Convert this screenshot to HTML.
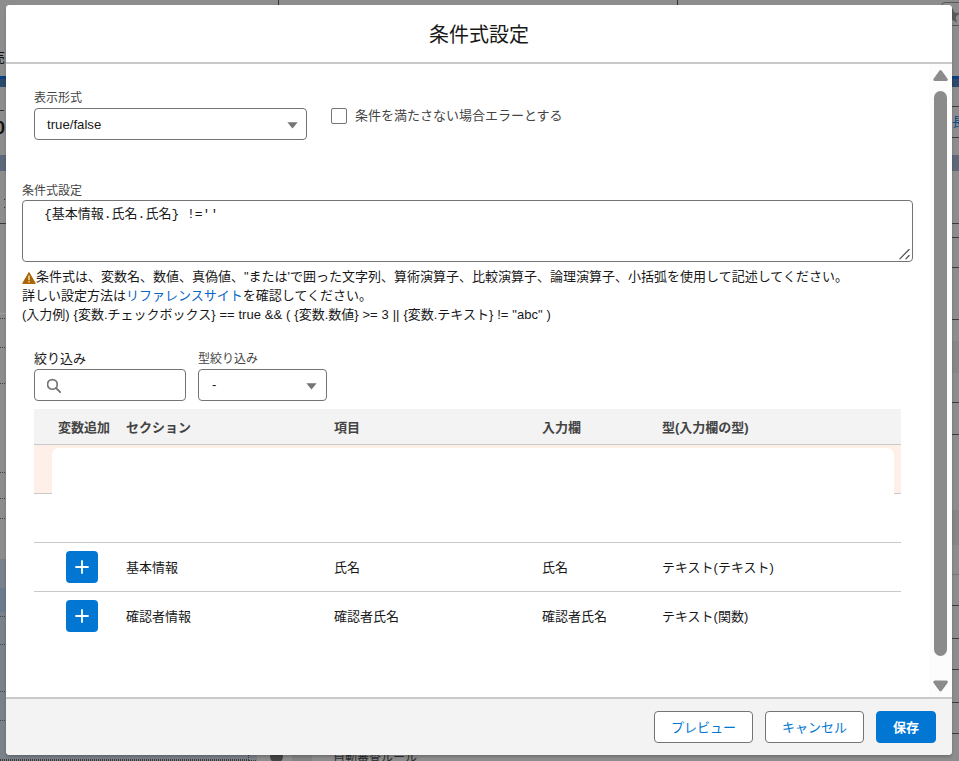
<!DOCTYPE html>
<html lang="ja">
<head>
<meta charset="utf-8">
<title>条件式設定</title>
<style>
*{box-sizing:border-box;margin:0;padding:0}
html,body{width:959px;height:761px;overflow:hidden}
body{position:relative;background:#8d8d8d;font-family:"Liberation Sans","Noto Sans CJK JP",sans-serif;font-size:13px;color:#181818}
.abs{position:absolute}
.t{position:absolute;white-space:nowrap;line-height:1}
/* backdrop fragments */
.bg{position:absolute}
.dot{left:0;width:6px;height:1px;background:repeating-linear-gradient(90deg,#444 0 1px,transparent 1px 2px)}
.hl{left:950px;width:9px;height:1px;background:#3d3d3d}
/* modal */
#modal{position:absolute;left:6px;top:5px;width:946px;height:750px;background:#fff;border-radius:4px;overflow:hidden;box-shadow:0 2px 3px rgba(0,0,0,.2)}
#in{position:absolute;left:0;top:-1px;width:946px;height:751px}
#hdr{position:absolute;left:0;top:0;width:946px;height:60px;border-bottom:2px solid #c9c9c9;background:#fff}
#title{position:absolute;left:0;width:946px;top:19px;text-align:center;font-size:20px;line-height:24px;color:#181818}
#ftr{position:absolute;left:0;top:693px;width:946px;height:58px;background:#f3f3f3;border-top:2px solid #c9c9c9}
.btn{position:absolute;top:12px;height:32px;border:1px solid #747474;border-radius:4px;background:#fff;color:#0176d3;font-size:13px;line-height:31px;text-align:center}
.btn.brand{background:#0176d3;border-color:#0176d3;color:#fff;font-weight:bold}
/* scrollbar */
#sb{position:absolute;left:923px;top:60px;width:23px;height:633px;background:#fcfcfc}
#thumb{position:absolute;left:5px;top:27px;width:13px;height:565px;border-radius:6.5px;background:#8b8b8b}
.lbl{font-size:12px;color:#444}
.box{position:absolute;border:1px solid #747474;border-radius:4px;background:#fff}
.help{font-size:13px;color:#181818}
a{color:#0a66c4;text-decoration:none}
#th{position:absolute;left:28px;top:405px;width:867px;height:36px;background:#f3f3f3;border-bottom:1px solid #c9c9c9}
.th{position:absolute;top:12px;font-weight:bold;font-size:13px;color:#444;line-height:1;white-space:nowrap}
.row{position:absolute;left:28px;width:867px;height:49px;border-top:1px solid #c9c9c9}
.row .c{position:absolute;top:18px;font-size:13px;line-height:1;white-space:nowrap;color:#181818}
.plus{position:absolute;left:32px;top:8px;width:32px;height:32px;border-radius:4px;background:#0176d3}
</style>
</head>
<body>
<!-- backdrop fragments peeking around the modal -->
<div class="bg" style="left:278px;top:0;width:1px;height:6px;background:#333"></div>
<div class="bg" style="left:677px;top:0;width:1px;height:6px;background:#333"></div>
<div class="bg" style="left:941px;top:2px;width:30px;height:24px;border:1px solid #575757;border-radius:4px"></div>
<svg class="bg" style="left:944px;top:7px" width="16" height="16" viewBox="0 0 16 16"><path d="M8 0.5 L10.3 5.6 L15.8 6.2 L11.7 10 L12.9 15.5 L8 12.7 L3.1 15.5 L4.3 10 L0.2 6.2 L5.7 5.6 Z" fill="#5a5a5a"/></svg>
<!-- left strip -->
<div class="t" style="left:-8px;top:51px;font-size:13px;color:#111">売</div>
<div class="bg" style="left:0;top:76px;width:8px;height:3px;background:#0b3f80"></div>
<div class="bg" style="left:0;top:79px;width:8px;height:8px;background:#2c4a6c"></div>
<div class="bg" style="left:0;top:110px;width:4px;height:1px;background:#333"></div>
<div class="t" style="left:-5px;top:119px;font-size:18px;font-weight:bold;color:#111">0</div>
<div class="bg" style="left:0;top:155px;width:8px;height:16px;background:#5b6979"></div>
<div class="bg" style="left:4px;top:199px;width:1px;height:1px;background:#333"></div>
<div class="bg" style="left:4px;top:207px;width:1px;height:1px;background:#333"></div>
<div class="bg" style="left:0;top:223px;width:8px;height:1px;background:#3a3a3a"></div>
<div class="bg" style="left:0;top:313px;width:8px;height:1px;background:#a0a0a0"></div>
<div class="bg dot" style="top:318px"></div>
<div class="bg dot" style="top:347px"></div>
<div class="bg dot" style="top:383px"></div>
<div class="bg dot" style="top:472px"></div>
<div class="bg dot" style="top:498px"></div>
<div class="bg dot" style="top:518px"></div>
<div class="bg" style="left:0;top:559px;width:8px;height:29px;background:#78818c"></div>
<div class="bg" style="left:0;top:588px;width:8px;height:24px;background:#6b7b8d"></div>
<div class="bg" style="left:0;top:612px;width:8px;height:149px;background:#7a8189"></div>
<div class="bg dot" style="top:616px"></div>
<div class="bg dot" style="top:644px"></div>
<div class="bg dot" style="top:691px"></div>
<div class="bg dot" style="top:720px"></div>
<!-- bottom strip -->
<div class="bg" style="left:0;top:753px;width:257px;height:8px;background:#7a8189"></div>
<div class="bg" style="left:0;top:759px;width:249px;height:2px;background:repeating-linear-gradient(90deg,#3c3c3c 0 1px,transparent 1px 2px)"></div>
<div class="bg" style="left:249px;top:760px;width:8px;height:1px;background:repeating-linear-gradient(90deg,#3c3c3c 0 1px,transparent 1px 2px)"></div>
<div class="bg" style="left:248px;top:755px;width:1px;height:4px;background:repeating-linear-gradient(180deg,#333 0 1px,transparent 1px 2px)"></div>
<div class="bg" style="left:270px;top:750px;width:13px;height:13px;border-radius:50%;background:#444"></div>
<div class="bg" style="left:292px;top:750px;width:20px;height:11px;background:#838383"></div>
<div class="t" style="left:333px;top:752px;font-size:12px;color:#2b2b2b">自動審査ルール</div>
<!-- right strip -->
<div class="bg" style="left:950px;top:76px;width:9px;height:3px;background:#0b3f80"></div>
<div class="bg" style="left:950px;top:79px;width:9px;height:8px;background:#2c4a6c"></div>
<div class="bg hl" style="top:106px"></div>
<div class="t" style="left:952px;top:115px;font-size:13px;color:#0b4a8a">長</div>
<div class="bg hl" style="top:137px"></div>
<div class="bg" style="left:950px;top:155px;width:9px;height:16px;background:#5b6979"></div>
<div class="bg hl" style="top:223px"></div>
<div class="bg hl" style="top:237px"></div>
<div class="bg hl" style="top:267px"></div>
<div class="bg hl" style="top:319px"></div>
<div class="bg" style="left:950px;top:341px;width:9px;height:32px;background:#878787"></div>
<div class="bg hl" style="top:402px"></div>
<div class="bg hl" style="top:434px"></div>
<div class="bg" style="left:950px;top:510px;width:9px;height:35px;background:#868686"></div>
<div class="bg hl" style="top:574px;background:#777"></div>
<div class="bg hl" style="top:605px"></div>
<div class="bg hl" style="top:638px"></div>
<div class="bg hl" style="top:669px"></div>
<div class="bg hl" style="top:702px"></div>
<div class="bg hl" style="top:733px"></div>
<div id="modal"><div id="in">
  <div id="hdr"><div id="title">条件式設定</div></div>

  <div id="sb">
    <svg class="abs" style="left:4px;top:6px" width="16" height="13" viewBox="0 0 16 13"><path d="M7.55 1.7 L13.3 9.6 H1.8 Z" fill="#8b8b8b" stroke="#8b8b8b" stroke-width="3" stroke-linejoin="round"/></svg>
    <div id="thumb"></div>
    <svg class="abs" style="left:4px;top:616px" width="16" height="13" viewBox="0 0 16 13"><path d="M7.55 9.8 L13.3 2 H1.8 Z" fill="#8b8b8b" stroke="#8b8b8b" stroke-width="3" stroke-linejoin="round"/></svg>
  </div>

  <!-- 表示形式 -->
  <div class="t lbl" style="left:28px;top:88px">表示形式</div>
  <div class="box" style="left:28px;top:104px;width:273px;height:32px">
    <div class="t" style="left:12px;top:9px;font-size:13.2px">true/false</div>
    <svg class="abs" style="left:251.5px;top:13px" width="11" height="7" viewBox="0 0 11 7"><path d="M0.4 0.3 H10.6 L5.5 6.5 Z" fill="#747474"/></svg>
  </div>
  <div class="box" style="left:325px;top:104px;width:16px;height:16px;border-radius:2px"></div>
  <div class="t" style="left:349px;top:105px;font-size:13px;color:#444">条件を満たさない場合エラーとする</div>

  <!-- 条件式設定 -->
  <div class="t lbl" style="left:16px;top:181px">条件式設定</div>
  <div class="box" style="left:16px;top:196px;width:891px;height:62px">
    <div class="t" style="left:21px;top:7px;font-size:13px;font-family:'Liberation Mono','Noto Sans CJK JP',monospace">{基本情報.氏名.氏名} !=''</div>
    <svg class="abs" style="right:1px;bottom:1px" width="12" height="12" viewBox="0 0 12 12"><path d="M10.1 1.5 L0.9 10.8 M10.1 7.5 L6.9 10.8" stroke="#4a4a4a" stroke-width="1.15" stroke-linecap="round" fill="none"/></svg>
  </div>
  <svg class="abs" style="left:16px;top:267px" width="15" height="14" viewBox="0 0 15 14"><path d="M7 1.5 L13.3 12.4 H0.7 Z" fill="#a96404" stroke="#a96404" stroke-width="1" stroke-linejoin="round"/><rect x="6.3" y="4.6" width="1.4" height="4.6" fill="#f6e6cc"/><rect x="6.3" y="10" width="1.4" height="1.4" fill="#f6e6cc"/></svg>
  <div class="t help" style="left:30px;top:266px">条件式は、変数名、数値、真偽値、"または'で囲った文字列、算術演算子、比較演算子、論理演算子、小括弧を使用して記述してください。</div>
  <div class="t help" style="left:16px;top:285px">詳しい設定方法は<a>リファレンスサイト</a>を確認してください。</div>
  <div class="t help" style="left:16px;top:304px;word-spacing:0.3px">(入力例) {変数.チェックボックス} == true &amp;&amp; ( {変数.数値} &gt;= 3 || {変数.テキスト} != "abc" )</div>

  <!-- filters -->
  <div class="t" style="left:28px;top:348px;font-size:13px;color:#181818">絞り込み</div>
  <div class="box" style="left:28px;top:365px;width:152px;height:32px">
    <svg class="abs" style="left:12px;top:8px" width="16" height="16" viewBox="0 0 16 16"><circle cx="5.4" cy="6.4" r="4.85" fill="none" stroke="#747474" stroke-width="1.7"/><path d="M9 10 L13.2 14.2" stroke="#747474" stroke-width="1.8" stroke-linecap="round"/></svg>
  </div>
  <div class="t lbl" style="left:192px;top:349px">型絞り込み</div>
  <div class="box" style="left:192px;top:365px;width:129px;height:32px">
    <div class="t" style="left:13px;top:8px;font-size:13px">-</div>
    <svg class="abs" style="left:107px;top:12.9px" width="11" height="7" viewBox="0 0 11 7"><path d="M0.4 0.3 H10.6 L5.5 6.5 Z" fill="#747474"/></svg>
  </div>

  <!-- table -->
  <div id="th">
    <div class="th" style="left:24px">変数追加</div>
    <div class="th" style="left:92px">セクション</div>
    <div class="th" style="left:300px">項目</div>
    <div class="th" style="left:508px">入力欄</div>
    <div class="th" style="left:628px">型(入力欄の型)</div>
  </div>
  <div class="abs" style="left:28px;top:441px;width:867px;height:48px;background:#fef0e9"></div>
  <div class="abs" style="left:28px;top:489px;width:867px;height:1px;background:#c9c9c9"></div>
  <div class="abs" style="left:45.5px;top:444px;width:842px;height:50px;background:#fff;border-radius:7px 7px 0 0"></div>

  <div class="row" style="top:538px">
    <div class="plus"><svg width="32" height="32" viewBox="0 0 32 32"><path d="M16 10 V22 M10 16 H22" stroke="#fff" stroke-width="1.8" stroke-linecap="round"/></svg></div>
    <div class="c" style="left:92px">基本情報</div>
    <div class="c" style="left:300px">氏名</div>
    <div class="c" style="left:508px">氏名</div>
    <div class="c" style="left:628px">テキスト(テキスト)</div>
  </div>
  <div class="row" style="top:587px">
    <div class="plus"><svg width="32" height="32" viewBox="0 0 32 32"><path d="M16 10 V22 M10 16 H22" stroke="#fff" stroke-width="1.8" stroke-linecap="round"/></svg></div>
    <div class="c" style="left:92px">確認者情報</div>
    <div class="c" style="left:300px">確認者氏名</div>
    <div class="c" style="left:508px">確認者氏名</div>
    <div class="c" style="left:628px">テキスト(関数)</div>
  </div>

  <div id="ftr">
    <div class="btn" style="left:648px;width:99px">プレビュー</div>
    <div class="btn" style="left:759px;width:99px">キャンセル</div>
    <div class="btn brand" style="left:870px;width:60px">保存</div>
  </div>
</div></div>
</body>
</html>
